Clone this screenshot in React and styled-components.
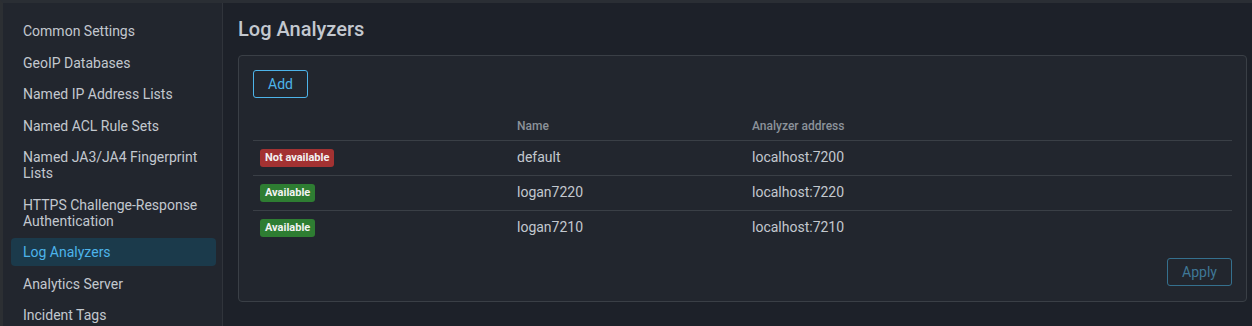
import React from "react";
import styled, { createGlobalStyle } from "styled-components";

const GlobalStyle = createGlobalStyle`
  html, body {
    margin: 0;
    padding: 0;
    background: #1d2129;
    font-family: Roboto, "Liberation Sans", sans-serif;
  }
`;

const navItems = [
  "Common Settings",
  "GeoIP Databases",
  "Named IP Address Lists",
  "Named ACL Rule Sets",
  "Named JA3/JA4 Fingerprint Lists",
  "HTTPS Challenge-Response Authentication",
  "Log Analyzers",
  "Analytics Server",
  "Incident Tags",
];

const analyzers = [
  { ok: false, name: "default", address: "localhost:7200" },
  { ok: true, name: "logan7220", address: "localhost:7220" },
  { ok: true, name: "logan7210", address: "localhost:7210" },
];

export default function App() {
  return (
    <>
      <GlobalStyle />
      <Page>
        <Sidebar>
          {navItems.map((item) => (
            <NavItem key={item} $active={item === "Log Analyzers"}>
              {item}
            </NavItem>
          ))}
        </Sidebar>
        <Main>
          <Title>Log Analyzers</Title>
          <Panel>
            <Toolbar>
              <OutlineButton>Add</OutlineButton>
            </Toolbar>
            <Grid>
              <HeadRow>
                <HeadCell />
                <HeadCell>Name</HeadCell>
                <HeadCell>Analyzer address</HeadCell>
              </HeadRow>
              {analyzers.map((a) => (
                <Row key={a.name}>
                  <Cell $status>
                    <Badge $ok={a.ok}>{a.ok ? "Available" : "Not available"}</Badge>
                  </Cell>
                  <Cell>{a.name}</Cell>
                  <Cell>{a.address}</Cell>
                </Row>
              ))}
            </Grid>
            <Footer>
              <OutlineButton $disabled>Apply</OutlineButton>
            </Footer>
          </Panel>
        </Main>
      </Page>
    </>
  );
}

const Page = styled.div`
  display: flex;
  height: 326px;
  overflow: hidden;
  border-top: 3px solid #2a2e34;
  border-left: 3px solid #2c2f33;
  box-sizing: border-box;
`;

const Sidebar = styled.nav`
  width: 220px;
  flex-shrink: 0;
  display: flex;
  flex-direction: column;
  gap: 3.5px;
  background: #22262e;
  border-right: 1px solid #30343b;
  padding: 14px 6px 0 8px;
  box-sizing: border-box;
`;

const NavItem = styled.div`
  padding: 6px 12px;
  font-size: 14px;
  line-height: 16px;
  border-radius: 4px;
  color: ${(p) => (p.$active ? "#4db4ea" : "#c3c8cf")};
  background: ${(p) => (p.$active ? "#1b3a4b" : "transparent")};
`;

const Main = styled.main`
  flex: 1;
  padding: 13px 5px 0 15px;
  min-width: 0;
`;

const Title = styled.h1`
  margin: 0 0 12px;
  font-size: 20px;
  line-height: 27px;
  font-weight: 500;
  color: #c3c8cf;
`;

const Panel = styled.section`
  background: #22262e;
  border: 1px solid #3a3f46;
  border-radius: 4px;
  padding: 14px;
  height: 247px;
  box-sizing: border-box;
`;

const Toolbar = styled.div`
  display: flex;
  margin-bottom: 14px;
`;

const OutlineButton = styled.button`
  font-family: Roboto, "Liberation Sans", sans-serif;
  font-size: 14px;
  height: 28px;
  padding: 0 14px;
  background: transparent;
  border: 1px solid ${(p) => (p.$disabled ? "#35708e" : "#4db4ea")};
  color: ${(p) => (p.$disabled ? "#3f7897" : "#4db4ea")};
  border-radius: 3px;
  cursor: ${(p) => (p.$disabled ? "default" : "pointer")};
`;

const Grid = styled.div`
  display: flex;
  flex-direction: column;
`;

const HeadRow = styled.div`
  display: grid;
  grid-template-columns: 264px 235px 1fr;
  align-items: center;
  height: 28px;
  border-bottom: 1px solid #3a3f46;
`;

const HeadCell = styled.div`
  font-size: 12px;
  font-weight: 500;
  color: #8c929a;
`;

const Row = styled.div`
  display: grid;
  grid-template-columns: 264px 235px 1fr;
  align-items: center;
  height: 34px;
  & + & {
    border-top: 1px solid #3a3f46;
  }
`;

const Cell = styled.div`
  font-size: 14px;
  color: #c3c8cf;
  padding-left: ${(p) => (p.$status ? "7px" : "0")};
  padding-bottom: 2px;
`;

const Badge = styled.span`
  display: inline-block;
  font-size: 11px;
  font-weight: 700;
  line-height: 18px;
  padding: 0 5px;
  border-radius: 3px;
  color: #f2f2f2;
  background: ${(p) => (p.$ok ? "#2e7d32" : "#a33232")};
`;

const Footer = styled.div`
  display: flex;
  justify-content: flex-end;
  margin-top: 13px;
`;
